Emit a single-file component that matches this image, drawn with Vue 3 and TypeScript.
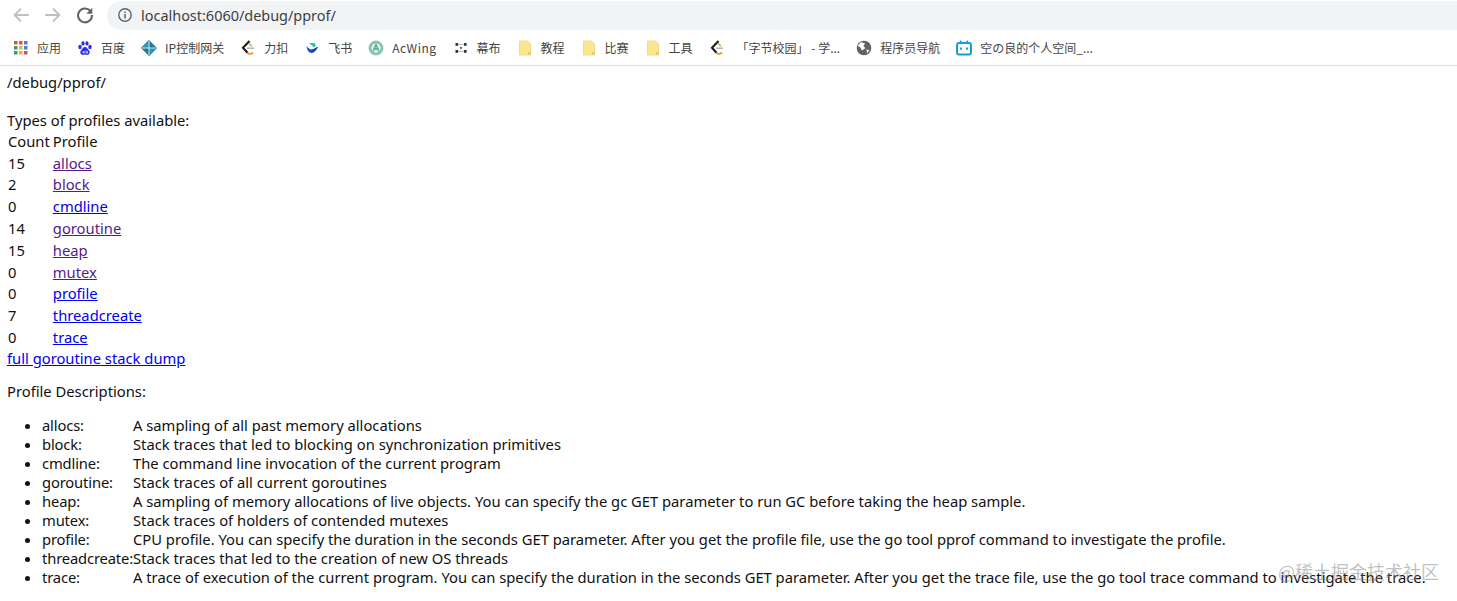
<template>
  <div class="page">
    <div class="toolbar">
      <svg class="nav" viewBox="0 0 24 24"><path d="M20.500 12H5M12 5l-7 7 7 7" fill="none" stroke="#bcbfc3" stroke-width="2"/></svg>
      <svg class="nav" viewBox="0 0 24 24"><path d="M3.500 12H19M12 5l7 7-7 7" fill="none" stroke="#bcbfc3" stroke-width="2"/></svg>
      <svg class="nav" viewBox="0 0 24 24"><path d="M17.800 7.500A7.600 7.600 0 1 0 19.600 12" fill="none" stroke="#5f6368" stroke-width="2.200"/><path d="M20 4v6.500h-6.500z" fill="#5f6368"/></svg>
      <div class="address">
        <svg class="info" viewBox="0 0 16 16"><circle cx="8" cy="8" r="6.200" fill="none" stroke="#5f6368" stroke-width="1.400"/><path d="M8 7v4.400M8 4.400v1.500" stroke="#5f6368" stroke-width="1.500"/></svg>
        <span>localhost:6060/debug/pprof/</span>
      </div>
    </div>

    <div class="bookmarks">
      <div v-for="b in bookmarks" :key="b.label" class="bookmark" :class="b.kind">
        <svg class="bm-icon" viewBox="0 0 16 16" v-html="icons[b.icon]"></svg>
        <span>{{ b.label }}</span>
      </div>
    </div>

    <div class="content">
      <div class="title">/debug/pprof/</div>
      <div class="types">Types of profiles available:</div>
      <table class="profiles">
        <thead>
          <tr><th>Count</th><th>Profile</th></tr>
        </thead>
        <tbody>
          <tr v-for="p in profiles" :key="p.name">
            <td>{{ p.count }}</td>
            <td><a href="#" :class="{ visited: p.visited }">{{ p.name }}</a></td>
          </tr>
        </tbody>
      </table>
      <a href="#" class="dump">full goroutine stack dump</a>
      <p class="desc-title">Profile Descriptions:</p>
      <ul class="descriptions">
        <li v-for="d in descriptions" :key="d.name">
          <span class="term">{{ d.name }}:</span>{{ d.text }}
        </li>
      </ul>
    </div>
    <div class="watermark">@稀土掘金技术社区</div>
  </div>
</template>

<script setup lang="ts">
const leet = '<path d="M9.500 1 3 7.800l4.500 5" fill="none" stroke="#1c1c1c" stroke-width="2.100"/><path d="M7 8.200h7" stroke="#b5b5b5" stroke-width="1.600"/><path d="M7.500 12.800c1.800 1.800 3.800 1.500 5.500-.2" fill="none" stroke="#eba340" stroke-width="2.100"/><path d="M9 3.200l3 3" stroke="#eba340" stroke-width="1.600"/>'
const folder = '<path d="M2.500 1h8l3 3v11h-11z" fill="#fde58f" stroke="#ecd283" stroke-width=".8"/><path d="M11 12h2.500v3H11z" fill="#f0cd62"/>'

const apps: [string, number, number][] = [
  ['#d9534a', 1, 1], ['#d9534a', 6, 1], ['#4a80d8', 11, 1],
  ['#3f9e5d', 1, 6], ['#e8b63e', 6, 6], ['#4a80d8', 11, 6],
  ['#3f9e5d', 1, 11], ['#e8b63e', 6, 11], ['#d9534a', 11, 11],
]

const icons: Record<string, string> = {
  apps: apps.map(([c, x, y]) => `<rect x="${x}" y="${y}" width="3.500" height="3.500" fill="${c}"/>`).join(''),
  baidu: '<g fill="#2932e1"><ellipse cx="3" cy="7" rx="1.700" ry="2.200"/><ellipse cx="6" cy="3.400" rx="1.600" ry="2.200"/><ellipse cx="10" cy="3.400" rx="1.600" ry="2.200"/><ellipse cx="13" cy="7" rx="1.700" ry="2.200"/><path d="M8 7c-2 0-2.500 2-4 3.500S3.500 15 6 15c1 0 1.300-.4 2-.4s1 .4 2 .4c2.500 0 3.500-3 2-4.500S10 7 8 7z"/></g><path d="M6 11v2h1.200v-2M9 10.500v2.500h1.500v-2" fill="none" stroke="#fff" stroke-width=".7"/>',
  ip: '<path d="M8 0 16 8 8 16 0 8z" fill="#1f7a99"/><path d="M0 8 8 0v8z" fill="#2f94ab"/><path d="M8 8h8L8 16z" fill="#2f94ab"/><path d="M8 1v14M1 8h14" stroke="#dff0f4" stroke-width=".9"/>',
  leet,
  feishu: '<path d="M2.500 6c2 3 4.800 4 7.800 3.200L7.500 13c-2.500.2-4.500-3-5-7z" fill="#1456d8"/><path d="M5 3h5.500l1.500 3-2 1.500C8.500 6 7 4.500 5 3z" fill="#22c5c0"/><path d="M8 9.500c2-.3 3.500-2.500 6.300-2.500l-3 4c-1 1.300-2.500 2-4.300 2z" fill="#1a3f9e"/>',
  acwing: '<circle cx="8" cy="8" r="7.500" fill="#8ccba6"/><circle cx="8" cy="8" r="5.200" fill="#dfeef3" stroke="#6fa9d4" stroke-width=".8"/><path d="M5 11.500 8 4.500l3 7M6.300 9h3.400" fill="none" stroke="#4caf7a" stroke-width="1.300"/>',
  mubu: '<path d="M4 4.500h8M4 11.500h8" stroke="#777" stroke-width=".5"/><g fill="#333"><rect x="2.500" y="3" width="2.600" height="2.800"/><rect x="11" y="3" width="2.600" height="2.800"/><rect x="2.500" y="10" width="2.600" height="2.800"/><rect x="11" y="10" width="2.600" height="2.800"/><rect x="7.200" y="7" width="1.600" height="1.800"/></g>',
  folder,
  globe: '<circle cx="8" cy="8" r="7.300" fill="#5f6368"/><path d="M5 2 9 3.500 7.500 6.500 9.500 8 6 10.500 4 7 1.500 6zM10.500 9.500l3 .5-2.500 3.500z" fill="#fff"/>',
  bili: '<path d="M4 .6 6 3M12 .6 10 3" stroke="#12a0d8" stroke-width="1.400"/><rect x="1" y="3" width="14" height="11.500" rx="2" fill="none" stroke="#12a0d8" stroke-width="2"/><path d="M5 7.500v2.200M11 7.500v2.200" stroke="#12a0d8" stroke-width="1.900"/>',
}

const bookmarks = [
  { icon: 'apps', label: '应用' },
  { icon: 'baidu', label: '百度' },
  { icon: 'ip', label: 'IP控制网关' },
  { icon: 'leet', label: '力扣' },
  { icon: 'feishu', label: '飞书' },
  { icon: 'acwing', label: 'AcWing', kind: 'latin' },
  { icon: 'mubu', label: '幕布' },
  { icon: 'folder', label: '教程' },
  { icon: 'folder', label: '比赛' },
  { icon: 'folder', label: '工具' },
  { icon: 'leet', label: '「字节校园」 - 学...', kind: 'wide' },
  { icon: 'globe', label: '程序员导航' },
  { icon: 'bili', label: '空の良的个人空间_...' },
]

const profiles = [
  { count: 15, name: 'allocs', visited: true },
  { count: 2, name: 'block', visited: true },
  { count: 0, name: 'cmdline', visited: false },
  { count: 14, name: 'goroutine', visited: true },
  { count: 15, name: 'heap', visited: true },
  { count: 0, name: 'mutex', visited: true },
  { count: 0, name: 'profile', visited: false },
  { count: 7, name: 'threadcreate', visited: false },
  { count: 0, name: 'trace', visited: false },
]

const descriptions = [
  { name: 'allocs', text: 'A sampling of all past memory allocations' },
  { name: 'block', text: 'Stack traces that led to blocking on synchronization primitives' },
  { name: 'cmdline', text: 'The command line invocation of the current program' },
  { name: 'goroutine', text: 'Stack traces of all current goroutines' },
  { name: 'heap', text: 'A sampling of memory allocations of live objects. You can specify the gc GET parameter to run GC before taking the heap sample.' },
  { name: 'mutex', text: 'Stack traces of holders of contended mutexes' },
  { name: 'profile', text: 'CPU profile. You can specify the duration in the seconds GET parameter. After you get the profile file, use the go tool pprof command to investigate the profile.' },
  { name: 'threadcreate', text: 'Stack traces that led to the creation of new OS threads' },
  { name: 'trace', text: 'A trace of execution of the current program. You can specify the duration in the seconds GET parameter. After you get the trace file, use the go tool trace command to investigate the trace.' },
]
</script>

<style>
html, body {
  margin: 0;
  background: #fff;
}
</style>

<style scoped>
.page {
  position: relative;
  height: 601px;
  overflow: hidden;
  font-family: "Noto Sans", "Noto Sans CJK SC", sans-serif;
  color: #111;
}

.toolbar {
  display: flex;
  align-items: center;
  height: 30px;
  padding-left: 10px;
  box-sizing: border-box;
}

.nav {
  width: 22px;
  height: 22px;
  margin-right: 10px;
}

.address {
  flex: 1;
  height: 29px;
  margin-left: 1px;
  padding-left: 10px;
  display: flex;
  align-items: center;
  gap: 8px;
  background: #f1f3f4;
  border-radius: 15px 0 0 15px;
  font-size: 14.450px;
  color: #3c4043;
}

.info {
  width: 16px;
  height: 16px;
}

.bookmarks {
  display: flex;
  align-items: center;
  gap: 16px;
  height: 35px;
  padding-left: 13px;
  border-bottom: 1px solid #dcdcdc;
  font-family: "Noto Sans CJK SC", "Noto Sans", sans-serif;
  font-size: 12px;
  color: #444;
}

.bookmark {
  display: flex;
  align-items: center;
  gap: 8px;
  white-space: nowrap;
}

.bookmark.latin span {
  letter-spacing: 0.500px;
}

.bookmark.wide {
  gap: 12px;
}

.bm-icon {
  width: 16px;
  height: 16px;
}

.content {
  padding: 7px 7px 0;
  font-size: 14.750px;
  line-height: 19px;
}

.types {
  margin-top: 19px;
}

.profiles {
  border-spacing: 2px;
  margin: -0.500px 0 0 -1px;
}

.profiles th {
  font-weight: 400;
  text-align: left;
  padding: 0;
  height: 19.800px;
}

.profiles td {
  padding: 0;
  height: 19.800px;
}

.profiles th:first-child {
  padding-right: 1px;
}

a {
  color: #0000ee;
}

a.visited {
  color: #551a8b;
}

.dump {
  display: block;
  margin-top: -0.500px;
}

.desc-title {
  margin: 14px 0 15px;
}

.descriptions {
  margin: 0;
  padding-left: 35px;
}

.term {
  display: inline-block;
  min-width: 91px;
  letter-spacing: -0.150px;
}

.watermark {
  position: absolute;
  right: 18px;
  top: 558px;
  font-family: "Noto Sans CJK SC", sans-serif;
  font-size: 18px;
  color: rgba(130, 130, 130, 0.5);
}
</style>
